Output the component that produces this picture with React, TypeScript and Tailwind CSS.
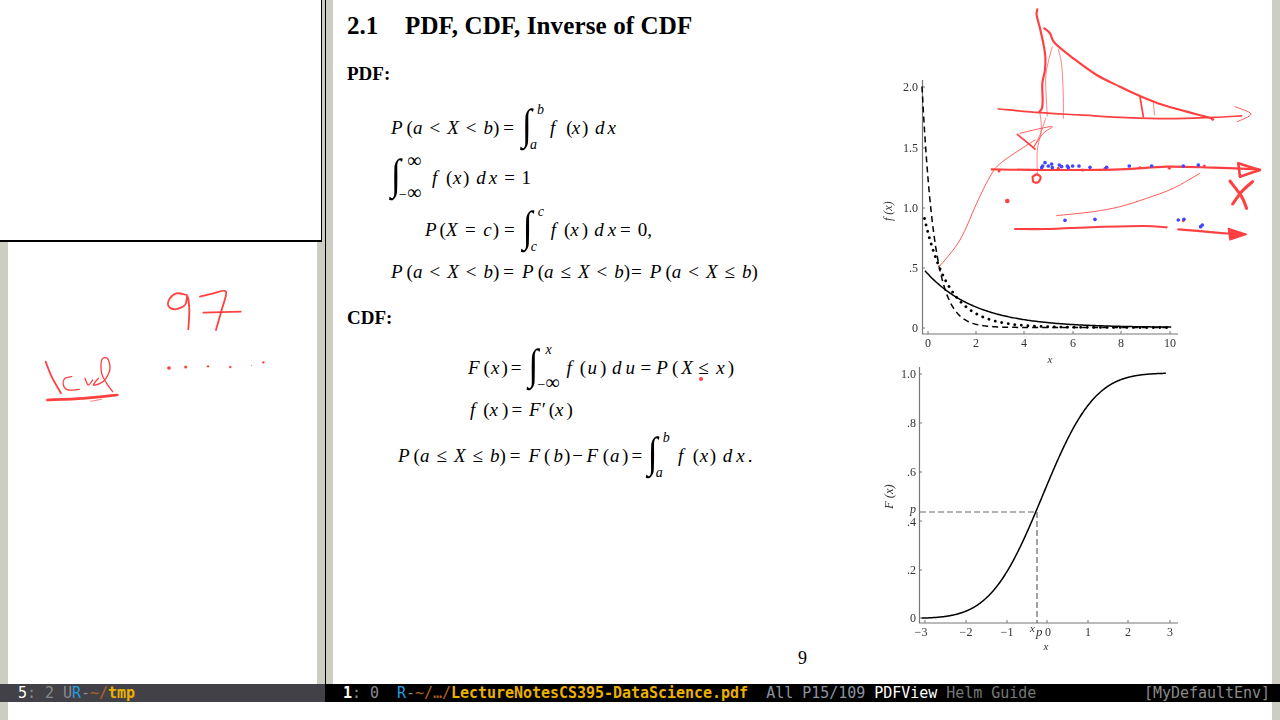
import type { ReactNode } from "react";

type Pt = [number, number];

// catmull-rom through hand-read points, so the ink looks like ink
function smooth(pts: Pt[]) {
  let d = `M${pts[0][0]} ${pts[0][1]}`;
  for (let i = 0; i < pts.length - 1; i++) {
    const p0 = pts[i - 1] ?? pts[i];
    const p1 = pts[i];
    const p2 = pts[i + 1];
    const p3 = pts[i + 2] ?? p2;
    const c1 = [p1[0] + (p2[0] - p0[0]) / 6, p1[1] + (p2[1] - p0[1]) / 6];
    const c2 = [p2[0] - (p3[0] - p1[0]) / 6, p2[1] - (p3[1] - p1[1]) / 6];
    d += ` C${c1[0]} ${c1[1]} ${c2[0]} ${c2[1]} ${p2[0]} ${p2[1]}`;
  }
  return d;
}

const rightInk: { w: number; p: Pt[] }[] = [
  { w: 5, p: [[472, 28], [470, 45], [480, 85], [490, 130], [496, 170], [495, 210], [487, 250], [488, 300], [486, 325], [478, 335]] },
  { w: 5, p: [[493, 85], [510, 100], [525, 130], [580, 175], [650, 225], [720, 260], [785, 290], [850, 315], [920, 335], [995, 355]] },
  { w: 4, p: [[355, 327], [480, 338], [600, 345], [740, 353], [870, 356], [1000, 352], [1085, 348]] },
  { w: 2, p: [[1065, 320], [1113, 342], [1072, 365]] },
  { w: 1.5, p: [[517, 140], [505, 185], [497, 240], [502, 348]] },
  { w: 1.5, p: [[535, 148], [545, 195], [550, 290], [550, 355]] },
  { w: 4, p: [[780, 290], [790, 350]] },
  { w: 1.5, p: [[820, 308], [824, 345]] },
  { w: 1.5, p: [[480, 340], [484, 390], [472, 450], [472, 520]] },
  { w: 1.5, p: [[497, 355], [482, 400], [462, 440]] },
  { w: 4, p: [[412, 403], [465, 447]] },
  { w: 2, p: [[420, 400], [470, 388], [517, 380], [490, 400], [462, 440]] },
  { w: 2, p: [[178, 800], [240, 720], [290, 610], [330, 530], [365, 487], [465, 420]] },
  { w: 5, p: [[458, 530], [470, 523], [482, 532], [474, 547], [460, 545], [458, 530]] },
  { w: 5, p: [[335, 508], [500, 510], [720, 508], [860, 500], [1000, 503], [1135, 508]] },
  { w: 6, p: [[1075, 490], [1140, 510]] },
  { w: 6, p: [[1140, 510], [1080, 530]] },
  { w: 6, p: [[1075, 490], [1080, 530]] },
  { w: 2, p: [[530, 647], [640, 635], [720, 620], [800, 595], [880, 565], [960, 520]] },
  { w: 5, p: [[405, 687], [500, 687], [650, 681], [790, 678], [860, 682]] },
  { w: 5, p: [[895, 688], [1000, 697], [1060, 702]] },
  { w: 7, p: [[1050, 543], [1085, 590], [1100, 625]] },
  { w: 7, p: [[1118, 545], [1085, 575], [1058, 612]] },
];

const leftInk: { w: number; p: Pt[] }[] = [
  { w: 4, p: [[560, 195], [530, 190], [510, 205], [505, 228], [525, 238], [555, 225], [562, 198], [568, 240], [565, 298]] },
  { w: 4, p: [[600, 200], [640, 190], [678, 185], [665, 240], [648, 300]] },
  { w: 4, p: [[610, 248], [722, 245]] },
  { w: 4, p: [[137, 395], [155, 440], [183, 490]] },
  { w: 3, p: [[215, 440], [195, 445], [190, 465], [205, 480], [238, 478]] },
  { w: 3, p: [[255, 445], [265, 465], [278, 450]] },
  { w: 3, p: [[295, 445], [280, 465], [300, 460], [318, 445], [330, 415], [322, 385], [305, 390], [305, 430], [320, 460], [338, 485]] },
  { w: 6, p: [[142, 510], [250, 505], [352, 495]] },
  { w: 1.5, p: [[272, 514], [305, 508]] },
];

const blueDots: Pt[] = [
  [485, 503], [488, 498], [495, 488], [505, 498], [515, 492], [517, 503], [538, 495], [545, 500], [562, 498],
  [565, 503], [578, 498], [597, 498], [630, 502], [680, 502], [748, 498], [815, 498], [910, 498], [955, 495],
  [555, 661], [645, 658], [912, 658], [895, 660], [962, 680], [967, 675],
];
const redDots: Pt[] = [
  [357, 513], [998, 358], [535, 505], [608, 510], [675, 505], [780, 503], [868, 505], [973, 498], [910, 662],
];
const leftDots: [number, number, number][] = [
  [507, 414, 5.5], [557, 411, 4.5], [624, 409, 3.5], [691, 411, 3.5], [755, 406, 1.5], [790, 397, 3.5],
];

function InkLayer() {
  return (
    <svg viewBox="0 0 1280 720" className="absolute inset-0 h-[720px] w-[1280px]" fill="none" strokeLinecap="round" strokeLinejoin="round">
      <g transform="translate(880 0) scale(0.3333)" stroke="#ff4040">
        {rightInk.map((s, i) => (
          <path key={i} d={smooth(s.p)} strokeWidth={s.w * 1.3} />
        ))}
        <path d="M1045 685 L1100 703 L1050 720 Z" fill="#ff4040" strokeWidth={4} />
        <circle cx={382} cy={603} r={7} fill="#ff4040" stroke="none" />
        {redDots.map(([x, y], i) => (
          <circle key={i} cx={x} cy={y} r={4.5} fill="#ff4040" stroke="none" />
        ))}
        {blueDots.map(([x, y], i) => (
          <circle key={i} cx={x} cy={y} r={5.5} fill="#4444ff" stroke="none" />
        ))}
      </g>
      <g transform="translate(0 230) scale(0.3333)" stroke="#ff4040">
        {leftInk.map((s, i) => (
          <path key={i} d={smooth(s.p)} strokeWidth={s.w * 1.35} />
        ))}
        {leftDots.map(([x, y, r], i) => (
          <circle key={i} cx={x} cy={y} r={r} fill="#ff4040" stroke="none" />
        ))}
      </g>
      <circle cx={701} cy={379} r={2} fill="#ff4040" />
    </svg>
  );
}

const expCurve = (rate: number, amp: number, from: number) => {
  const pts: string[] = [];
  for (let x = from; x <= 10; x += 0.05) {
    pts.push(`${922 + x * 25},${327.5 - 120.5 * amp * Math.exp(-rate * x)}`);
  }
  return pts.join(" ");
};

// standard normal cdf, summed numerically, shifted a little to sit on the printed curve
const normalCurve = () => {
  const pts: string[] = [];
  const step = 0.02;
  let sum = 0;
  for (let x = -5; x <= 2.93; x += step) {
    sum += (Math.exp(-((x + 0.1) ** 2) / 2) / Math.sqrt(2 * Math.PI)) * step;
    if (x >= -3.1) pts.push(`${1047 + x * 40.7},${618.5 - 245.5 * sum}`);
  }
  return pts.join(" ");
};

function DensityFigure() {
  return (
    <svg viewBox="880 75 300 290" className="h-[290px] w-[300px] shrink-0 blur-[0.3px]" fontFamily="'Liberation Serif', serif" fontSize={12} fill="#333">
      <path d="M922.5 80V334H1178" fill="none" stroke="#777" strokeWidth={1.2} />
      {[87, 148, 208, 268, 328].map((y) => (
        <line key={y} x1={922} x2={925} y1={y} y2={y} stroke="#777" />
      ))}
      {[928, 976, 1024, 1073, 1121, 1170].map((x) => (
        <line key={x} x1={x} x2={x} y1={331} y2={334} stroke="#777" />
      ))}
      {[["2.0", 87], ["1.5", 148], ["1.0", 208], [".5", 268], ["0", 328]].map(([t, y]) => (
        <text key={t} x={918} y={Number(y) + 4} textAnchor="end">{t}</text>
      ))}
      {[["0", 928], ["2", 976], ["4", 1024], ["6", 1073], ["8", 1121], ["10", 1170]].map(([t, x]) => (
        <text key={t} x={Number(x)} y={347} textAnchor="middle">{t}</text>
      ))}
      <text x={1050} y={363} textAnchor="middle" fontStyle="italic" fontSize={11}>x</text>
      <text transform="translate(892 221) rotate(-90)" fontStyle="italic">f (x)</text>
      <polyline points={expCurve(0.5, 0.5, 0.12)} fill="none" stroke="#000" strokeWidth={1.5} />
      <polyline points={expCurve(2, 2, 0)} fill="none" stroke="#000" strokeWidth={1.5} strokeDasharray="6 4" />
      <polyline points={expCurve(1, 1, 0.1)} fill="none" stroke="#000" strokeWidth={2.8} strokeLinecap="round" strokeDasharray="0.1 6.5" />
    </svg>
  );
}

function CdfFigure() {
  return (
    <svg viewBox="880 365 300 290" className="h-[290px] w-[300px] shrink-0 blur-[0.3px]" fontFamily="'Liberation Serif', serif" fontSize={12} fill="#333">
      <path d="M919.5 367V623H1178" fill="none" stroke="#777" strokeWidth={1.2} />
      {[374, 423, 472, 521, 570, 618].map((y) => (
        <line key={y} x1={919} x2={922} y1={y} y2={y} stroke="#777" />
      ))}
      {[925, 966, 1007, 1047, 1088, 1128, 1170].map((x) => (
        <line key={x} x1={x} x2={x} y1={620} y2={623} stroke="#777" />
      ))}
      {[["1.0", 374], [".8", 423], [".6", 472], [".4", 522], [".2", 570], ["0", 618]].map(([t, y]) => (
        <text key={t} x={916} y={Number(y) + 4} textAnchor="end">{t}</text>
      ))}
      <text x={916} y={513} textAnchor="end" fontStyle="italic">p</text>
      {[["−3", 921], ["−2", 966], ["−1", 1007], ["0", 1048], ["1", 1088], ["2", 1128], ["3", 1170]].map(([t, x]) => (
        <text key={t} x={Number(x)} y={636} textAnchor="middle">{t}</text>
      ))}
      <text x={1030} y={632} fontStyle="italic" fontSize={11}>x</text>
      <text x={1036} y={636} fontStyle="italic" fontSize={13}>p</text>
      <text x={1046} y={650} textAnchor="middle" fontStyle="italic" fontSize={11}>x</text>
      <text transform="translate(893 509) rotate(-90)" fontStyle="italic" fontSize={12.5}>F (x)</text>
      <path d="M920 512H1037V623" fill="none" stroke="#666" strokeWidth={1.2} strokeDasharray="6 3" />
      <polyline points={normalCurve()} fill="none" stroke="#000" strokeWidth={1.5} />
    </svg>
  );
}

function V({ children, className = "" }: { children: ReactNode; className?: string }) {
  return <span className={`italic ${className}`}>{children}</span>;
}

function Int({ sup, sub, className = "", supClass = "left-[15px]", subClass = "left-[8px]" }: { sup: ReactNode; sub: ReactNode; className?: string; supClass?: string; subClass?: string }) {
  return (
    <span className={`relative h-[48px] ${className}`}>
      <span className="absolute left-0 top-[-3px] origin-center scale-y-[1.2] text-[36px] leading-[48px]">∫</span>
      <span className={`absolute top-[-2px] text-[14px] italic leading-[16px] ${supClass}`}>{sup}</span>
      <span className={`absolute bottom-[-1px] text-[14px] italic leading-[16px] ${subClass}`}>{sub}</span>
    </span>
  );
}

function Inf({ minus = false }: { minus?: boolean }) {
  return (
    <span className="not-italic">
      {minus && "−"}
      <span className="text-[20px]">∞</span>
    </span>
  );
}

// f(x) and dx, spacing read from the page; each formula can override it
function Fx({ arg = "x", paren = "ml-[11px]", inner = "-ml-[1px]", close = "ml-[2px]" }: { arg?: string; paren?: string; inner?: string; close?: string }) {
  return (
    <>
      <V>f</V>
      <span className={paren}>(</span>
      <V className={inner}>{arg}</V>
      <span className={close}>)</span>
    </>
  );
}

function Dx({ arg = "x", d = "ml-[6.5px]", x = "ml-[3px]" }: { arg?: string; d?: string; x?: string }) {
  return (
    <>
      <V className={d}>d</V>
      <V className={x}>{arg}</V>
    </>
  );
}

const row = "flex items-center whitespace-pre text-[19px]";
const lt = "mx-[7px]";

function AB({ first, second }: { first: string; second: string }) {
  return (
    <>
      <V>P</V>
      <span className="ml-[4px]">(</span>
      <V>a</V>
      <span className={lt}>{first}</span>
      <V>X</V>
      <span className={lt}>{second}</span>
      <V>b</V>
      <span>)</span>
    </>
  );
}

function Formulas() {
  return (
    <div className="w-[547px] shrink-0 pl-[14px] font-['Liberation_Serif',serif] text-black">
      <h2 className="flex h-[52px] items-center text-[25px] font-bold">
        <span className="w-[58px]">2.1</span>
        <span className="tracking-[0.13px]">PDF, CDF, Inverse of CDF</span>
      </h2>
      <h3 className="flex h-[44px] items-center text-[19px] font-bold">PDF:</h3>
      <div className={`${row} mt-[6px] h-[52px] pl-[44px]`}>
        <AB first="<" second="<" />
        <span className="mx-[4px]">=</span>
        <Int sup="b" sub="a" className="ml-[4px] w-[28px]" />
        <Fx />
        <Dx />
      </div>
      <div className={`${row} h-[48px] pl-[44px]`}>
        <Int sup={<Inf />} sub={<Inf minus />} className="w-[41px]" supClass="left-[16px]" subClass="left-[8px]" />
        <Fx paren="ml-[8.7px]" inner="ml-[0.6px]" close="ml-[1.6px]" />
        <Dx d="ml-[7px]" />
        <span className="ml-[7px]">=</span>
        <span className="ml-[6.7px]">1</span>
      </div>
      <div className={`${row} h-[56px] pl-[78px]`}>
        <V>P</V>
        <span className="ml-[3px]">(</span>
        <V>X</V>
        <span className="mx-[7.5px]">=</span>
        <V>c</V>
        <span className="ml-[1px]">)</span>
        <span className="ml-[5px] mr-[4px]">=</span>
        <Int sup="c" sub="c" className="ml-[4px] w-[28px]" />
        <Fx paren="ml-[8px]" inner="" close="ml-[3px]" />
        <Dx d="ml-[6px]" x="ml-[4px]" />
        <span className="ml-[4px]">=</span>
        <span className="ml-[7px]">0,</span>
      </div>
      <div className={`${row} h-[28px] pl-[44px]`}>
        <AB first="<" second="<" />
        <span className="ml-[4px] mr-[8px]">=</span>
        <AB first="≤" second="<" />
        <span className="ml-[1px] mr-[8px]">=</span>
        <AB first="<" second="≤" />
      </div>

      <h3 className="mt-[10px] flex h-[44px] items-center text-[19px] font-bold">CDF:</h3>
      <div className={`${row} h-[56px] pl-[121px]`}>
        <V>F</V>
        <span className="ml-[4px]">(</span>
        <V className="ml-[1px]">x</V>
        <span className="ml-[2px]">)</span>
        <span className="ml-[3px]">=</span>
        <Int sup="x" sub={<Inf minus />} className="ml-[7px] w-[38px]" supClass="left-[17px]" subClass="left-[9px]" />
        <Fx arg="u" paren="ml-[8px]" inner="ml-[1.5px]" close="ml-[3px]" />
        <Dx arg="u" d="ml-[5.7px]" x="ml-[4px]" />
        <span className="ml-[5.5px]">=</span>
        <V className="ml-[5px]">P</V>
        <span className="ml-[4px]">(</span>
        <V className="ml-[3px]">X</V>
        <span className="ml-[5.5px]">≤</span>
        <V className="ml-[7.5px]">x</V>
        <span className="ml-[3px]">)</span>
      </div>
      <div className={`${row} h-[28px] pl-[123px]`}>
        <Fx paren="ml-[8px]" inner="" close="ml-[4px]" />
        <span className="ml-[3px]">=</span>
        <V className="ml-[7px]">F</V>
        <span className="w-[8px] pl-[1px]">′</span>
        <span>(</span>
        <V>x</V>
        <span className="ml-[3px]">)</span>
      </div>
      <div className={`${row} h-[64px] pl-[51px]`}>
        <AB first="≤" second="≤" />
        <span className="ml-[4px]">=</span>
        <V className="ml-[8px]">F</V>
        <span className="ml-[4px]">(</span>
        <V className="ml-[3px]">b</V>
        <span className="ml-[1px]">)</span>
        <span className="ml-[2px]">−</span>
        <V className="ml-[3.5px]">F</V>
        <span className="ml-[4.7px]">(</span>
        <V className="ml-[1px]">a</V>
        <span className="ml-[2.5px]">)</span>
        <span className="ml-[3px]">=</span>
        <Int sup="b" sub="a" className="ml-[5.6px] w-[30.3px]" />
        <Fx paren="ml-[9.4px]" inner="ml-[0.7px]" close="ml-[1.6px]" />
        <Dx d="ml-[6.7px]" x="ml-[4px]" />
        <span className="ml-[3px]">.</span>
      </div>
    </div>
  );
}

function Gutter({ className = "w-2" }: { className?: string }) {
  return <div className={`shrink-0 bg-[#cdcdc1] ${className}`} />;
}

export default function App() {
  return (
    <div className="relative flex h-[720px] w-[1280px] flex-col overflow-hidden bg-white">
      <div className="flex h-[684px]">
        {/* left window, with the frame of the window above it */}
        <div className="relative flex w-[325px]">
          <Gutter />
          <div className="flex-1" />
          <Gutter />
          <div className="absolute left-0 top-0 h-[242px] w-[322px] border-b-2 border-r border-black bg-white" />
        </div>
        <div className="w-px bg-black" />
        {/* pdf window */}
        <div className="flex flex-1">
          <Gutter className="w-[7px]" />
          <div className="flex flex-1 flex-col">
            <div className="flex h-[650px]">
              <Formulas />
              <div className="flex flex-col pt-[75px]">
                <DensityFigure />
                <CdfFigure />
              </div>
            </div>
            <div className="text-center font-['Liberation_Serif',serif] text-[18px] leading-[16px] text-black">9</div>
          </div>
          <Gutter />
        </div>
      </div>

      {/* mode lines */}
      <div className="flex h-[18px] whitespace-pre font-['DejaVu_Sans_Mono',monospace] text-[15px] leading-[18px] tracking-[-0.03px]">
        <div className="w-[325px] bg-[#414147] pl-[18px] text-[#8a8a8a]">
          <span className="text-white">5</span>: 2 U<span className="text-[#1e9fe0]">R</span>-<span className="text-[#b5651d]">~/</span>
          <span className="font-bold text-[#ebb000]">tmp</span>
        </div>
        <div className="flex flex-1 justify-between bg-black pl-[18px] pr-[10px] text-[#8a8a8a]">
          <div>
            <span className="font-bold text-white">1</span>: 0{"  "}
            <span className="text-[#1e9fe0]">R</span>-<span className="text-[#b5651d]">~/…/</span>
            <span className="font-bold text-[#ebb000]">LectureNotesCS395-DataScience.pdf</span>
            {"  "}
            <span className="text-[#8c93a0]">All P15/109 </span>
            <span className="text-white">PDFView</span>
            <span className="text-[#777]"> Helm Guide</span>
          </div>
          <div className="text-[#8a8a8a]">[MyDefaultEnv]</div>
        </div>
      </div>
      <div className="flex h-[18px] justify-between">
        <Gutter />
        <Gutter />
      </div>

      <InkLayer />
    </div>
  );
}
